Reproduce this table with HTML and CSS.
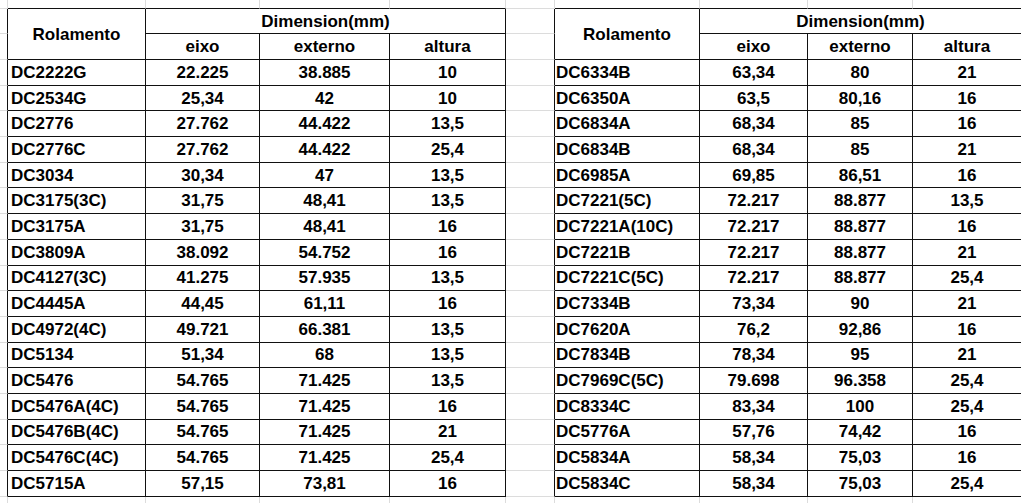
FILE: index.html
```html
<!DOCTYPE html>
<html lang="pt">
<head>
<meta charset="utf-8">
<title>Rolamentos</title>
<link rel="stylesheet" href="styles.css">
</head>
<body>
<div class="sheet">
<div class="m"></div><div class="mt"></div><div class="mt"></div><div class="mt"></div><div class="mt"></div><div class="m"></div><div class="mt"></div><div class="mt"></div><div class="mt"></div><div class="mte"></div><div class="x"></div>

<div class="ml"></div><div class="c r2">Rolamento</div><div class="c s3">Dimension(mm)</div><div class="ml"></div><div class="c r2">Rolamento</div><div class="c s3 e">Dimension(mm)</div><div class="x"></div>
<div class="ml"></div><div class="c">eixo</div><div class="c">externo</div><div class="c">altura</div><div class="ml"></div><div class="c">eixo</div><div class="c">externo</div><div class="c e">altura</div><div class="x"></div>

<div class="ml"></div><div class="c n">DC2222G</div><div class="c">22.225</div><div class="c">38.885</div><div class="c">10</div><div class="ml"></div><div class="c n2">DC6334B</div><div class="c">63,34</div><div class="c">80</div><div class="c e">21</div><div class="x"></div>
<div class="ml"></div><div class="c n">DC2534G</div><div class="c">25,34</div><div class="c">42</div><div class="c">10</div><div class="ml"></div><div class="c n2">DC6350A</div><div class="c">63,5</div><div class="c">80,16</div><div class="c e">16</div><div class="x"></div>
<div class="ml"></div><div class="c n">DC2776</div><div class="c">27.762</div><div class="c">44.422</div><div class="c">13,5</div><div class="ml"></div><div class="c n2">DC6834A</div><div class="c">68,34</div><div class="c">85</div><div class="c e">16</div><div class="x"></div>
<div class="ml"></div><div class="c n">DC2776C</div><div class="c">27.762</div><div class="c">44.422</div><div class="c">25,4</div><div class="ml"></div><div class="c n2">DC6834B</div><div class="c">68,34</div><div class="c">85</div><div class="c e">21</div><div class="x"></div>
<div class="ml"></div><div class="c n">DC3034</div><div class="c">30,34</div><div class="c">47</div><div class="c">13,5</div><div class="ml"></div><div class="c n2">DC6985A</div><div class="c">69,85</div><div class="c">86,51</div><div class="c e">16</div><div class="x"></div>
<div class="ml"></div><div class="c n">DC3175(3C)</div><div class="c">31,75</div><div class="c">48,41</div><div class="c">13,5</div><div class="ml"></div><div class="c n2">DC7221(5C)</div><div class="c">72.217</div><div class="c">88.877</div><div class="c e">13,5</div><div class="x"></div>
<div class="ml"></div><div class="c n">DC3175A</div><div class="c">31,75</div><div class="c">48,41</div><div class="c">16</div><div class="ml"></div><div class="c n2">DC7221A(10C)</div><div class="c">72.217</div><div class="c">88.877</div><div class="c e">16</div><div class="x"></div>
<div class="ml"></div><div class="c n">DC3809A</div><div class="c">38.092</div><div class="c">54.752</div><div class="c">16</div><div class="ml"></div><div class="c n2">DC7221B</div><div class="c">72.217</div><div class="c">88.877</div><div class="c e">21</div><div class="x"></div>
<div class="ml"></div><div class="c n">DC4127(3C)</div><div class="c">41.275</div><div class="c">57.935</div><div class="c">13,5</div><div class="ml"></div><div class="c n2">DC7221C(5C)</div><div class="c">72.217</div><div class="c">88.877</div><div class="c e">25,4</div><div class="x"></div>
<div class="ml"></div><div class="c n">DC4445A</div><div class="c">44,45</div><div class="c">61,11</div><div class="c">16</div><div class="ml"></div><div class="c n2">DC7334B</div><div class="c">73,34</div><div class="c">90</div><div class="c e">21</div><div class="x"></div>
<div class="ml"></div><div class="c n">DC4972(4C)</div><div class="c">49.721</div><div class="c">66.381</div><div class="c">13,5</div><div class="ml"></div><div class="c n2">DC7620A</div><div class="c">76,2</div><div class="c">92,86</div><div class="c e">16</div><div class="x"></div>
<div class="ml"></div><div class="c n">DC5134</div><div class="c">51,34</div><div class="c">68</div><div class="c">13,5</div><div class="ml"></div><div class="c n2">DC7834B</div><div class="c">78,34</div><div class="c">95</div><div class="c e">21</div><div class="x"></div>
<div class="ml"></div><div class="c n">DC5476</div><div class="c">54.765</div><div class="c">71.425</div><div class="c">13,5</div><div class="ml"></div><div class="c n2">DC7969C(5C)</div><div class="c">79.698</div><div class="c">96.358</div><div class="c e">25,4</div><div class="x"></div>
<div class="ml"></div><div class="c n">DC5476A(4C)</div><div class="c">54.765</div><div class="c">71.425</div><div class="c">16</div><div class="ml"></div><div class="c n2">DC8334C</div><div class="c">83,34</div><div class="c">100</div><div class="c e">25,4</div><div class="x"></div>
<div class="ml"></div><div class="c n">DC5476B(4C)</div><div class="c">54.765</div><div class="c">71.425</div><div class="c">21</div><div class="ml"></div><div class="c n2">DC5776A</div><div class="c">57,76</div><div class="c">74,42</div><div class="c e">16</div><div class="x"></div>
<div class="ml"></div><div class="c n">DC5476C(4C)</div><div class="c">54.765</div><div class="c">71.425</div><div class="c">25,4</div><div class="ml"></div><div class="c n2">DC5834A</div><div class="c">58,34</div><div class="c">75,03</div><div class="c e">16</div><div class="x"></div>
<div class="ml"></div><div class="c n">DC5715A</div><div class="c">57,15</div><div class="c">73,81</div><div class="c">16</div><div class="ml"></div><div class="c n2">DC5834C</div><div class="c">58,34</div><div class="c">75,03</div><div class="c e">25,4</div><div class="x"></div>

<div class="mb"></div><div class="mb"></div><div class="mb"></div><div class="mb"></div><div class="mb"></div><div class="mb"></div><div class="mb"></div><div class="mb"></div><div class="mb"></div><div class="x"></div><div class="x"></div>
</div>
</body>
</html>
```
FILE: styles.css
```css
* { box-sizing: border-box; }

:root {
  --grid: #dcdcdc;
  --line: #111111;
}

body {
  margin: 0;
  background: #ffffff;
  color: #000000;
  font-family: "Liberation Sans", Arial, sans-serif;
  font-weight: bold;
  font-size: 17px;
}

.sheet {
  display: grid;
  grid-template-columns: 8px 138px 114px 130px 116px 49px 145px 108px 105px 108px 1fr;
  grid-template-rows: 9px 25px 26px repeat(17, 25.7px) 1fr;
  height: 503px;
  overflow: hidden;
}

.m {
  border-right: 1px solid var(--grid);
  border-bottom: 1px solid var(--grid);
}

.mt {
  border-right: 1px solid var(--grid);
  border-bottom: 1px solid var(--line);
}

.mte {
  border-bottom: 1px solid var(--line);
}

.ml {
  border-right: 1px solid var(--line);
  border-bottom: 1px solid var(--grid);
}

.mb {
  border-right: 1px solid var(--grid);
}

.c {
  display: flex;
  align-items: center;
  justify-content: center;
  white-space: nowrap;
  line-height: 1;
  border-right: 1px solid var(--line);
  border-bottom: 1px solid var(--line);
}

.c.n {
  justify-content: flex-start;
  padding-left: 3px;
}

.c.n2 {
  justify-content: flex-start;
  padding-left: 1px;
}

.c.e {
  border-right: none;
}

.r2 { grid-row: span 2; }
.s3 { grid-column: span 3; }
```
